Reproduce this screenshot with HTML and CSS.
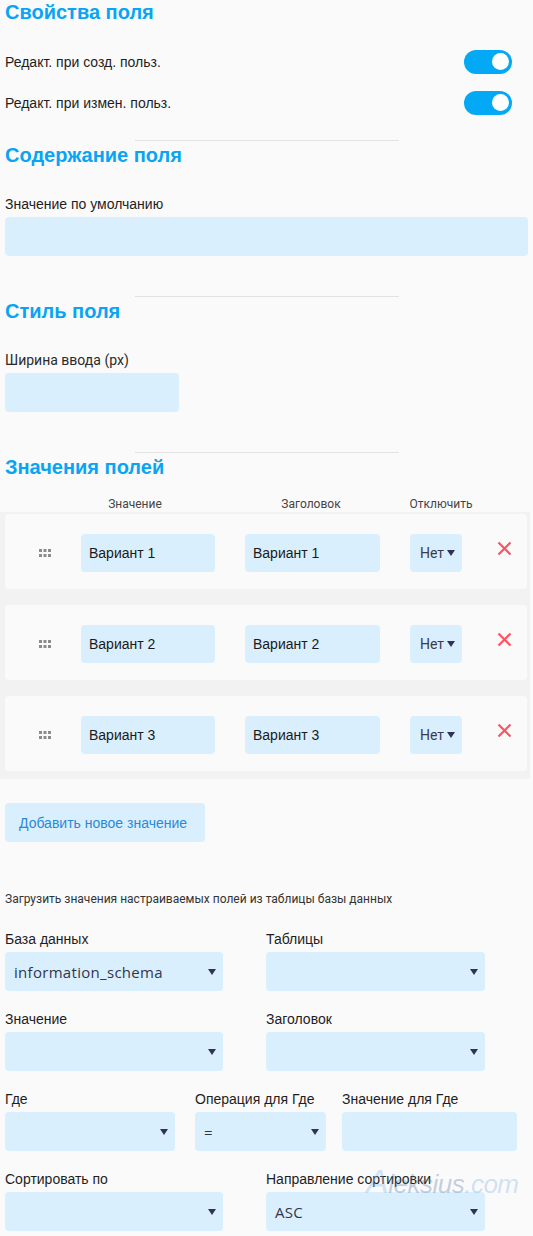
FILE: index.html
```html
<!DOCTYPE html>
<html lang="ru">
<head>
    <meta charset="UTF-8">
    <meta name="viewport" content="width=device-width, initial-scale=1.0">
    <title>Свойства поля</title>
    <link rel="stylesheet" href="styles.css">
</head>
<body>
    <div class="page">
        <!-- Свойства -->
        <section class="block">
            <h2 class="block-title">Свойства поля</h2>
            <div class="switch-list">
                <div class="switch-row">
                    <span>Редакт. при созд. польз.</span>
                    <span class="switch"><span class="knob"></span></span>
                </div>
                <div class="switch-row">
                    <span>Редакт. при измен. польз.</span>
                    <span class="switch"><span class="knob"></span></span>
                </div>
            </div>
        </section>

        <!-- Содержание -->
        <section class="block">
            <hr class="divider">
            <h2 class="block-title">Содержание поля</h2>
            <div class="field-label">Значение по умолчанию</div>
            <div class="input"></div>
        </section>

        <!-- Стиль -->
        <section class="block">
            <hr class="divider">
            <h2 class="block-title">Стиль поля</h2>
            <div class="field-label label-roboto">Ширина ввода (px)</div>
            <div class="input input-small"></div>
        </section>

        <!-- Значения -->
        <section class="block">
            <hr class="divider">
            <h2 class="block-title">Значения полей</h2>
            <div class="values-head">
                <span class="head-value">Значение</span>
                <span class="head-title">Заголовок</span>
                <span class="head-off">Отключить</span>
            </div>

            <div class="values-list">
                <div class="value-row">
                    <span class="handle">
                        <svg width="12" height="8" viewBox="0 0 12 8"><g fill="#8c8c8c"><rect x="0" y="0" width="3" height="3"/><rect x="4.5" y="0" width="3" height="3"/><rect x="9" y="0" width="3" height="3"/><rect x="0" y="5" width="3" height="3"/><rect x="4.5" y="5" width="3" height="3"/><rect x="9" y="5" width="3" height="3"/></g></svg>
                    </span>
                    <div class="cell-input">Вариант 1</div>
                    <div class="cell-input">Вариант 1</div>
                    <div class="cell-select">Нет<span class="caret"></span></div>
                    <span class="remove">
                        <svg width="15" height="15" viewBox="0 0 15 15"><path d="M1.5 1.5 L13.5 13.5 M13.5 1.5 L1.5 13.5" stroke="#ff5260" stroke-width="2.2" fill="none"/></svg>
                    </span>
                </div>
                <div class="value-row">
                    <span class="handle">
                        <svg width="12" height="8" viewBox="0 0 12 8"><g fill="#8c8c8c"><rect x="0" y="0" width="3" height="3"/><rect x="4.5" y="0" width="3" height="3"/><rect x="9" y="0" width="3" height="3"/><rect x="0" y="5" width="3" height="3"/><rect x="4.5" y="5" width="3" height="3"/><rect x="9" y="5" width="3" height="3"/></g></svg>
                    </span>
                    <div class="cell-input">Вариант 2</div>
                    <div class="cell-input">Вариант 2</div>
                    <div class="cell-select">Нет<span class="caret"></span></div>
                    <span class="remove">
                        <svg width="15" height="15" viewBox="0 0 15 15"><path d="M1.5 1.5 L13.5 13.5 M13.5 1.5 L1.5 13.5" stroke="#ff5260" stroke-width="2.2" fill="none"/></svg>
                    </span>
                </div>
                <div class="value-row">
                    <span class="handle">
                        <svg width="12" height="8" viewBox="0 0 12 8"><g fill="#8c8c8c"><rect x="0" y="0" width="3" height="3"/><rect x="4.5" y="0" width="3" height="3"/><rect x="9" y="0" width="3" height="3"/><rect x="0" y="5" width="3" height="3"/><rect x="4.5" y="5" width="3" height="3"/><rect x="9" y="5" width="3" height="3"/></g></svg>
                    </span>
                    <div class="cell-input">Вариант 3</div>
                    <div class="cell-input">Вариант 3</div>
                    <div class="cell-select">Нет<span class="caret"></span></div>
                    <span class="remove">
                        <svg width="15" height="15" viewBox="0 0 15 15"><path d="M1.5 1.5 L13.5 13.5 M13.5 1.5 L1.5 13.5" stroke="#ff5260" stroke-width="2.2" fill="none"/></svg>
                    </span>
                </div>
            </div>

            <button class="add-btn">Добавить новое значение</button>

            <p class="db-note">Загрузить значения настраиваемых полей из таблицы базы данных</p>

            <div class="db-form">
                <div class="db-row two">
                    <div class="db-field">
                        <div class="field-label">База данных</div>
                        <div class="select w218">information_schema<span class="caret"></span></div>
                    </div>
                    <div class="db-field">
                        <div class="field-label">Таблицы</div>
                        <div class="select w219"><span class="caret"></span></div>
                    </div>
                </div>
                <div class="db-row two">
                    <div class="db-field">
                        <div class="field-label">Значение</div>
                        <div class="select w218"><span class="caret"></span></div>
                    </div>
                    <div class="db-field">
                        <div class="field-label">Заголовок</div>
                        <div class="select w219"><span class="caret"></span></div>
                    </div>
                </div>
                <div class="db-row three">
                    <div class="db-field">
                        <div class="field-label">Где</div>
                        <div class="select w170"><span class="caret"></span></div>
                    </div>
                    <div class="db-field">
                        <div class="field-label">Операция для Где</div>
                        <div class="select w131">=<span class="caret"></span></div>
                    </div>
                    <div class="db-field">
                        <div class="field-label">Значение для Где</div>
                        <div class="input"></div>
                    </div>
                </div>
                <div class="db-row two">
                    <div class="db-field">
                        <div class="field-label">Сортировать по</div>
                        <div class="select w218"><span class="caret"></span></div>
                    </div>
                    <div class="db-field">
                        <div class="field-label">Направление сортировки</div>
                        <div class="select w219">ASC<span class="caret"></span></div>
                    </div>
                </div>
            </div>
        </section>

        <div class="watermark"><span class="wm-a">A</span>leksius<span class="wm-com">.com</span></div>
    </div>
</body>
</html>
```

FILE: styles.css
```css
* {
    margin: 0;
    padding: 0;
    box-sizing: border-box;
}

body {
    background-color: #fafafa;
    font-family: 'Liberation Sans', Arial, sans-serif;
    color: #1e1e1e;
}

.page {
    position: relative;
    padding: 0 5px;
    width: 533px;
}

.block-title {
    font-size: 20px;
    line-height: 24px;
    font-weight: bold;
    color: #09a4f4;
}

.divider {
    width: 264px;
    margin: 0 auto;
    border: none;
    border-top: 1px solid #e2e2e2;
    height: 1px;
}

.divider + .block-title {
    margin-top: 2px;
}

/* переключатели */
.switch-list {
    margin-top: 17px;
    margin-bottom: 17px;
}

.switch-row {
    height: 41px;
    display: flex;
    align-items: center;
    justify-content: space-between;
    padding-right: 16px;
    font-size: 14px;
}

.switch {
    width: 48px;
    height: 24px;
    border-radius: 12px;
    background-color: #03a9f4;
    display: flex;
    justify-content: flex-end;
    align-items: center;
    padding-right: 3px;
}

.knob {
    width: 17px;
    height: 17px;
    border-radius: 50%;
    background-color: #fff;
}

/* поля */
.field-label {
    font-size: 14px;
    line-height: 18px;
    margin-bottom: 4px;
    color: #1e1e1e;
    white-space: nowrap;
}

.block-title + .field-label {
    margin-top: 28px;
}

.label-roboto {
    font-family: Roboto, 'Liberation Sans', sans-serif;
    color: #2a2a2a;
}

.input {
    height: 39px;
    border-radius: 4px;
    background-color: #daeffd;
    margin-bottom: 40px;
}

.input-small {
    width: 174px;
}

.db-field .input {
    margin-bottom: 0;
}

/* значения */
.values-head {
    display: grid;
    grid-template-columns: 76px 108px 56px 132px 24px 80px;
    margin-top: 17px;
    font-family: Roboto, 'Liberation Sans', sans-serif;
    font-size: 12px;
    line-height: 16px;
    color: #444;
    text-align: center;
}

.head-value { grid-column: 2; }
.head-title { grid-column: 4; }
.head-off { grid-column: 6; }

.values-list {
    margin: 0 -2px 0 -5px;
    padding: 2px 3px 8px 5px;
    background-color: #f2f2f2;
    display: flex;
    flex-direction: column;
    gap: 16px;
}

.value-row {
    height: 75px;
    background-color: #fafafa;
    border-radius: 4px;
    display: grid;
    grid-template-columns: 46px 134px 135px 52px 1fr;
    column-gap: 30px;
    align-items: center;
    padding-top: 2px;
}

.handle {
    justify-self: end;
    display: flex;
}

.cell-input {
    height: 38px;
    border-radius: 4px;
    background-color: #daeffd;
    display: flex;
    align-items: center;
    padding-left: 8px;
    font-size: 14px;
    color: #1a1a1a;
}

.cell-select {
    height: 38px;
    border-radius: 4px;
    background-color: #daeffd;
    display: flex;
    align-items: center;
    padding-left: 10px;
    font-family: Roboto, 'Liberation Sans', sans-serif;
    font-size: 14px;
    color: #3a3a4a;
}

.cell-select .caret {
    margin-left: 3px;
}

.remove {
    display: flex;
    margin-left: 5px;
    margin-top: -8px;
}

.caret {
    width: 0;
    height: 0;
    border-left: 4px solid transparent;
    border-right: 4px solid transparent;
    border-top: 6px solid #2f3454;
}

.add-btn {
    margin-top: 24px;
    height: 39px;
    padding: 0 18px 0 14px;
    border: none;
    border-radius: 4px;
    background-color: #daeffd;
    color: #2a88d8;
    font-family: 'Liberation Sans', Arial, sans-serif;
    font-size: 14px;
}

.db-note {
    margin-top: 49px;
    font-family: Roboto, 'Liberation Sans', sans-serif;
    font-size: 12px;
    line-height: 16px;
    color: #333;
}

.db-form {
    margin-top: 23px;
    display: flex;
    flex-direction: column;
    gap: 19px;
}

.db-row {
    display: grid;
}

.db-row.two {
    grid-template-columns: 261px 1fr;
}

.db-row.three {
    grid-template-columns: 190px 147px 175px;
}

.select {
    height: 39px;
    border-radius: 4px;
    background-color: #daeffd;
    display: flex;
    align-items: center;
    justify-content: space-between;
    padding: 0 7px 0 9px;
    font-family: 'Open Sans', sans-serif;
    font-size: 15px;
    letter-spacing: 0.3px;
    color: #33364a;
}

.select .caret:only-child {
    margin-left: auto;
}

.w218 { width: 218px; }
.w219 { width: 219px; }
.w170 { width: 170px; }
.w131 { width: 131px; }

.watermark {
    position: absolute;
    left: 366px;
    top: 1162px;
    font-family: 'Liberation Sans', Arial, sans-serif;
    font-style: italic;
    font-size: 26px;
    letter-spacing: -0.5px;
    color: rgba(90, 120, 170, 0.35);
    pointer-events: none;
    white-space: nowrap;
}

.wm-a {
    color: rgba(140, 185, 235, 0.35);
    font-size: 34px;
}

.wm-com {
    color: rgba(130, 175, 230, 0.35);
}
```
